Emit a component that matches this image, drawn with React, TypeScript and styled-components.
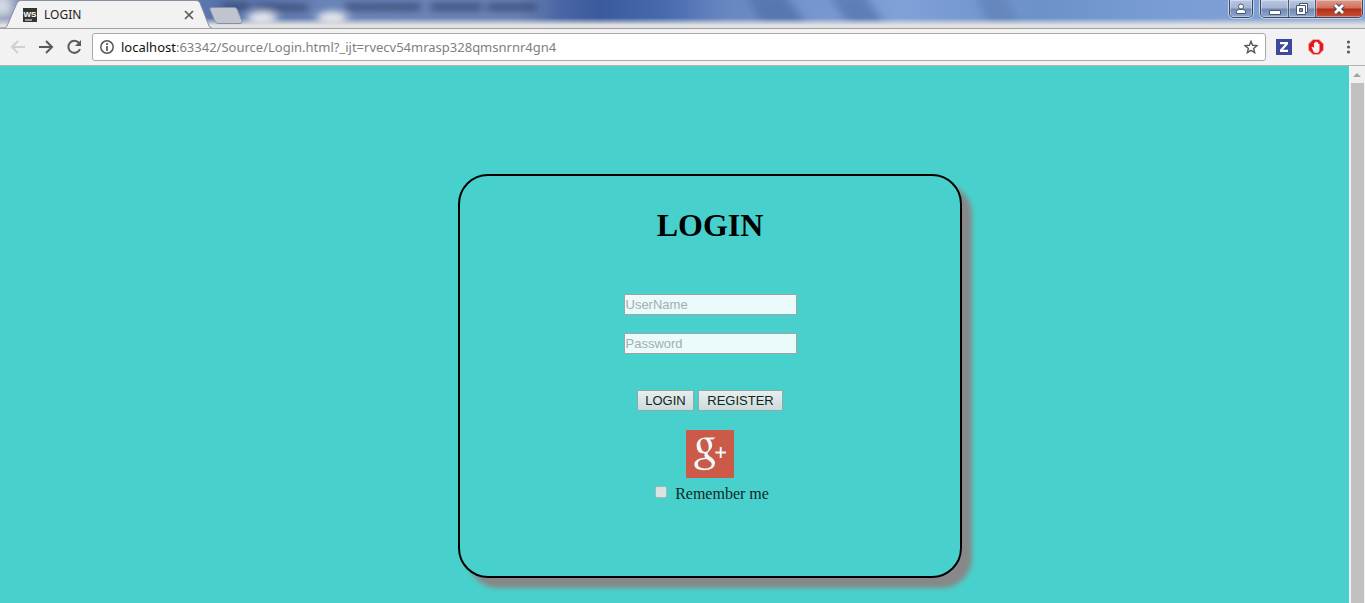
import React from "react";
import styled, { createGlobalStyle } from "styled-components";

const Global = createGlobalStyle`
  * { box-sizing: border-box; }
  html, body, #root { height: 100%; margin: 0; }
  body { overflow: hidden; background: #48d1cc; }
`;

const ui = `"Noto Sans", "Open Sans", sans-serif`;

const Window = styled.div`
  display: flex;
  flex-direction: column;
  min-height: 100vh;
`;

const TitleBar = styled.header`
  position: relative;
  display: flex;
  align-items: flex-start;
  height: 29px;
  overflow: hidden;
  border-bottom: 1px solid #a0a0a0;
  background: #7290c8;
`;

const Backdrop = styled.svg`
  position: absolute;
  inset: 0;
  width: 100%;
  height: 28px;
`;

const Tab = styled.div`
  position: relative;
  display: flex;
  align-items: center;
  width: 212px;
  height: 29px;
  padding: 0 18px 0 23px;
  gap: 7px;
  font: 12px/16px ${ui};
  color: #222;
`;

const TabShape = styled.svg`
  position: absolute;
  left: 0;
  top: 0;
`;

const Title = styled.span`
  position: relative;
  flex: 1;
  font-size: 12px;
`;

const Glyph = styled.svg`
  position: relative;
  display: block;
  flex: none;
`;

const IconButton = styled.button`
  display: flex;
  align-items: center;
  justify-content: center;
  padding: 0;
  border: 0;
  background: none;
  color: #5a5a5a;
`;

const NewTab = styled(IconButton)`
  position: relative;
  margin: 7px auto 0 -4px;
`;

const CaptionGroup = styled.div`
  position: relative;
  display: flex;
  height: 18px;
  margin-right: 7px;
  overflow: hidden;
  border: 1px solid #3b4964;
  border-top: 0;
  border-radius: 0 0 5px 5px;
  box-shadow: 0 0 0 1px #c5d2e8;
  & + & { margin-right: 2px; }
`;

const CaptionButton = styled(IconButton)<{ $wide: number; $close?: boolean }>`
  width: ${(p) => p.$wide}px;
  height: 17px;
  background: ${(p) =>
    p.$close
      ? "linear-gradient(#dc9a8c, #d0705c 48%, #b42c14 52%, #c5523a)"
      : "linear-gradient(#b9c8e2, #a2b4d2 48%, #7189b0 52%, #8fa7cd)"};
  box-shadow: inset 0 0 0 1px rgba(255, 255, 255, 0.35);
  & + & { border-left: 1px solid #4c5a76; }
`;

const Toolbar = styled.nav`
  display: flex;
  align-items: center;
  height: 37px;
  padding: 0 11px 0 9px;
  border-bottom: 1px solid #b2b2b2;
  background: #f2f2f2;
`;

const NavButtons = styled.div`
  display: flex;
  gap: 10px;
  margin-right: 9px;
`;

const Address = styled.div`
  display: flex;
  flex: 1;
  align-items: center;
  height: 28px;
  padding: 0 7px;
  gap: 7px;
  border: 1px solid #a9a9a9;
  border-radius: 3px;
  background: #fff;
`;

const Url = styled.span`
  flex: 1;
  font: 13px/18px ${ui};
  color: #808080;
  b { font-weight: 400; color: #111; }
`;

const Extensions = styled.div`
  display: flex;
  align-items: center;
  gap: 16px;
  margin-left: 10px;
`;

const Viewport = styled.div`
  display: flex;
  flex: 1;
`;

const Page = styled.main`
  display: flex;
  flex: 1;
  align-items: flex-start;
  justify-content: center;
  padding: 108px 0 0 71px;
  background: #48d1cc;
`;

const ScrollBar = styled.div`
  display: flex;
  flex-direction: column;
  align-items: center;
  width: 16px;
  background: #f1f1f1;
`;

const ScrollThumb = styled.div`
  flex: 1;
  width: 13px;
  background: #c1c1c1;
`;

const Card = styled.section`
  display: flex;
  flex-direction: column;
  align-items: center;
  width: 504px;
  min-height: 404px;
  padding: 31px 0 0;
  border: 2px solid #000;
  border-radius: 30px;
  box-shadow: 10px 10px 5px #888;
  font-family: "Liberation Serif", serif;
`;

const Heading = styled.h1`
  margin: 0 0 50px;
  font-size: 32px;
  line-height: 37px;
`;

const Form = styled.form`
  display: flex;
  flex-direction: column;
  align-items: center;
`;

const Field = styled.input`
  width: 173px;
  height: 21px;
  margin-bottom: 18px;
  padding: 1px;
  border: 1px solid #a3a3a3;
  border-radius: 0;
  background: #ebfafa;
  font: 13px "Liberation Sans", sans-serif;
  &::placeholder { color: #a2afaf; opacity: 1; }
`;

const Actions = styled.div`
  display: flex;
  gap: 4px;
  margin: 18px 0 19px;
`;

const Action = styled.button<{ $wide: number }>`
  min-width: ${(p) => p.$wide}px;
  height: 21px;
  padding: 0 7px;
  border: 1px solid #8fa9a8;
  border-radius: 1px;
  background: linear-gradient(#e6efee, #cbdcdb);
  font: 13px/19px "Liberation Sans", sans-serif;
  color: #152321;
`;

const GoogleLink = styled.a`
  display: block;
  width: 48px;
  height: 48px;
  margin-bottom: 6px;
`;

const Remember = styled.label`
  display: flex;
  align-items: center;
  gap: 8px;
  padding-left: 4px;
  font-size: 16px;
  line-height: 20px;
  color: #0e2a29;
`;

const Check = styled.input`
  appearance: none;
  width: 12px;
  height: 12px;
  margin: 0 0 4px;
  border: 1px solid #9fb8b6;
  border-radius: 2px;
  background: linear-gradient(#d3e2e1, #dce6e5);
`;

const TitleBackdrop = () => (
  <Backdrop preserveAspectRatio="none" viewBox="0 0 1365 28" aria-hidden="true">
    <defs>
      <linearGradient id="sky">
        <stop offset="0" stopColor="#8794b8" />
        <stop offset=".16" stopColor="#5873ad" />
        <stop offset=".26" stopColor="#6f87ba" />
        <stop offset=".38" stopColor="#6d84b6" />
        <stop offset=".41" stopColor="#4a66a5" />
        <stop offset=".44" stopColor="#3a5a9c" />
        <stop offset=".49" stopColor="#4a6cae" />
        <stop offset=".53" stopColor="#6785c0" />
        <stop offset=".57" stopColor="#7391cb" />
        <stop offset=".66" stopColor="#80a0d8" />
        <stop offset=".76" stopColor="#6c91c9" />
        <stop offset=".86" stopColor="#7a9dd6" />
        <stop offset="1" stopColor="#86a4d2" />
      </linearGradient>
      <linearGradient id="edge" x2="0" y2="1">
        <stop offset="0" stopColor="#e1e1e1" stopOpacity="0" />
        <stop offset="1" stopColor="#e1e1e1" />
      </linearGradient>
      <filter id="soft" x="-20%" y="-100%" width="140%" height="300%"><feGaussianBlur stdDeviation="5" /></filter>
      <filter id="blurred" x="-20%" y="-100%" width="140%" height="300%"><feGaussianBlur stdDeviation="4 3" /></filter>
    </defs>
    <rect width="1365" height="28" fill="url(#sky)" />
    <g filter="url(#soft)">
      <path d="M745 -6h40l24 36h-45z" fill="#5677b2" />
      <path d="M828 -6h36l24 36h-36z" fill="#5d7eb9" />
      <path d="M975 -6h30l16 36h-30z" fill="#6586be" />
      <path d="M-10 -4h22v20h-22z" fill="#d5dae4" />
    </g>
    <g filter="url(#blurred)">
      <path d="M222 2h28v9H222zM256 3h52v9H256zM345 2h76v10H345zM430 2h52v10H430zM487 2h50v10H487z" fill="#2c3a60" opacity=".55" />
      <ellipse cx="262" cy="18" rx="15" ry="7" fill="#dfe4ec" />
      <ellipse cx="332" cy="18" rx="15" ry="7" fill="#dfe4ec" />
    </g>
    <rect y="18" width="1365" height="7" fill="url(#edge)" />
    <rect y="25" width="1365" height="3" fill="#e1e1e1" />
  </Backdrop>
);

export default function App() {
  return (
    <Window>
      <Global />
      <TitleBar>
        <TitleBackdrop />
        <Tab>
          <TabShape width="212" height="29" aria-hidden="true">
            <path d="M0 29V28H4Q6 28 7 26L17 3Q18 1 20 1H197Q199 1 200 3L209 26Q210 28 212 28V29Z" fill="#f2f2f2" />
            <path d="M0 28H4Q6 28 7 26L17 3Q18 .5 20 .5H197Q199 .5 200 3L209 26Q210 28 212 28" fill="none" stroke="#8890a0" />
          </TabShape>
          <Glyph width="14" height="14" aria-hidden="true">
            <path d="M0 0h14v14H0z" fill="#343434" />
            <text x="7" y="8.500" textAnchor="middle" fontFamily="Liberation Sans, sans-serif" fontWeight="700" fontSize="8" fill="#fff">WS</text>
            <path d="M2 11.500h7v1H2z" fill="#fff" />
          </Glyph>
          <Title>LOGIN</Title>
          <IconButton aria-label="Close tab">
            <Glyph width="10" height="10"><path d="M1 1l8 8M9 1L1 9" stroke="currentColor" strokeWidth="1.700" /></Glyph>
          </IconButton>
        </Tab>
        <NewTab aria-label="New tab">
          <Glyph width="36" height="17"><path d="M4 .5H26Q28 .5 29 2L34 14Q35 16.500 32 16.500H11Q8 16.500 7 14.500L2 2.500Q1 .5 4 .5Z" fill="#bfc4cf" stroke="#8490a8" /></Glyph>
        </NewTab>
        <CaptionGroup>
          <CaptionButton aria-label="Profile" $wide={22}>
            <Glyph width="12" height="12"><circle cx="6" cy="3.500" r="2.500" fill="#fff" stroke="#48556e" /><path d="M1.500 10.500V8.500Q2 6.500 4.500 6.500h3Q10 6.500 10.500 8.500V10.500z" fill="#fff" stroke="#48556e" /></Glyph>
          </CaptionButton>
        </CaptionGroup>
        <CaptionGroup>
          <CaptionButton aria-label="Minimize" $wide={27}>
            <Glyph width="14" height="14"><path d="M1.500 8.500h11v4h-11z" fill="#fff" stroke="#48556e" /></Glyph>
          </CaptionButton>
          <CaptionButton aria-label="Restore" $wide={27}>
            <Glyph width="14" height="14"><path d="M4.500 1.500h8v9h-8z" fill="#fff" stroke="#48556e" /><path d="M1.500 3.500h9v9h-9z" fill="#fff" stroke="#48556e" /><path d="M4.500 6.500h3v3h-3z" fill="#8295b6" stroke="#48556e" /></Glyph>
          </CaptionButton>
          <CaptionButton aria-label="Close" $wide={47} $close>
            <Glyph width="14" height="12"><path d="M3 2l8 8M11 2L3 10" stroke="#55445a" strokeWidth="5" /><path d="M3 2l8 8M11 2L3 10" stroke="#fff" strokeWidth="2.800" /></Glyph>
          </CaptionButton>
        </CaptionGroup>
      </TitleBar>

      <Toolbar>
        <NavButtons>
          <IconButton aria-label="Back" disabled>
            <Glyph width="18" height="18"><path d="M16 9H3M9 3L3 9l6 6" fill="none" stroke="#d0d0d0" strokeWidth="2" /></Glyph>
          </IconButton>
          <IconButton aria-label="Forward">
            <Glyph width="18" height="18"><path d="M2 9h13M9 3l6 6-6 6" fill="none" stroke="currentColor" strokeWidth="2" /></Glyph>
          </IconButton>
          <IconButton aria-label="Reload">
            <Glyph width="18" height="18"><path d="M14 5A6 6 0 1 0 15 11" fill="none" stroke="currentColor" strokeWidth="2" /><path d="M16 2v6h-6z" fill="currentColor" /></Glyph>
          </IconButton>
        </NavButtons>
        <Address>
          <Glyph width="14" height="14" aria-hidden="true"><circle cx="7" cy="7" r="6.200" fill="none" stroke="#555" strokeWidth="1.500" /><path d="M7 3v2M7 6v5" stroke="#555" strokeWidth="1.700" /></Glyph>
          <Url><b>localhost</b>:63342/Source/Login.html?_ijt=rvecv54mrasp328qmsnrnr4gn4</Url>
          <IconButton aria-label="Bookmark">
            <Glyph width="14" height="14"><path d="M7 1.200l1.600 4.100 4.400.3-3.400 2.800 1.100 4.300L7 10.400l-3.700 2.300 1.100-4.300L1 5.600l4.400-.3z" fill="none" stroke="currentColor" strokeWidth="1.400" /></Glyph>
          </IconButton>
        </Address>
        <Extensions>
          <IconButton aria-label="Z extension">
            <Glyph width="16" height="16"><path d="M0 0h16v16H0z" fill="#3c489c" /><path d="M4 3h8v2.200L7 10.800h5V13H4v-2.200l5-5.600H4z" fill="#fff" /></Glyph>
          </IconButton>
          <IconButton aria-label="Ad blocker">
            <Glyph width="16" height="16"><path d="M5 .5h6L15.500 5v6L11 15.500H5L.5 11V5z" fill="#e81616" stroke="#f3a8a8" /><path d="M3.500 8.200L4.800 7.800 6 9V4q.7-.8 1.300 0V2.800q.7-.8 1.400 0V3.500q.7-.8 1.400 0V5q.7-.8 1.400 0V10.500Q11.500 14 8.500 14T5 11.500z" fill="#f6f2f2" /></Glyph>
          </IconButton>
          <IconButton aria-label="Menu">
            <Glyph width="14" height="14"><circle cx="8.500" cy="2" r="1.600" fill="currentColor" /><circle cx="8.500" cy="7" r="1.600" fill="currentColor" /><circle cx="8.500" cy="12" r="1.600" fill="currentColor" /></Glyph>
          </IconButton>
        </Extensions>
      </Toolbar>

      <Viewport>
        <Page>
          <Card>
            <Heading>LOGIN</Heading>
            <Form onSubmit={(e) => e.preventDefault()}>
              <Field aria-label="UserName" placeholder="UserName" />
              <Field aria-label="Password" type="password" placeholder="Password" />
              <Actions>
                <Action type="submit" $wide={57}>LOGIN</Action>
                <Action type="button" $wide={85}>REGISTER</Action>
              </Actions>
              <GoogleLink href="#google" aria-label="Sign in with Google Plus">
                <Glyph width="48" height="48" viewBox="0 0 48 48">
                  <rect width="48" height="48" rx="1" fill="#cb5a49" />
                  <g fill="#eefafa" fillRule="evenodd">
                    <path d="M19 7.600H29.500L27 9.400H23.800Q26.300 11.800 26.300 15Q26.300 18.500 23.500 20.800Q21.500 22.400 21.500 23.600Q21.500 24.800 24 26.600Q29 29.800 29 33Q29 40.300 18 40.300Q8.300 40.300 8.300 34.600Q8.300 28.300 19.400 27.500Q17.800 25.800 18.600 23.400Q10.600 23.700 10.600 16Q10.600 8.400 19 7.600ZM17.900 9Q14.300 9.200 14.300 13.700Q14.800 21.800 19.400 21.900Q22.700 21.600 22.700 17.300Q22.200 9.200 17.900 9ZM20.600 29Q11.800 29.300 11.800 33.800Q12 38.400 18.700 38.500Q25.700 38.300 25.700 34.200Q25.700 32 20.600 29Z" />
                  </g>
                  <path d="M29.300 22.500H40M34.700 17V28" stroke="#eefafa" strokeWidth="2" />
                </Glyph>
              </GoogleLink>
              <Remember><Check type="checkbox" />Remember me</Remember>
            </Form>
          </Card>
        </Page>
        <ScrollBar aria-hidden="true">
          <Glyph width="16" height="17"><path d="M4 11l4-4 4 4z" fill="#a3a3a3" /></Glyph>
          <ScrollThumb />
        </ScrollBar>
      </Viewport>
    </Window>
  );
}
